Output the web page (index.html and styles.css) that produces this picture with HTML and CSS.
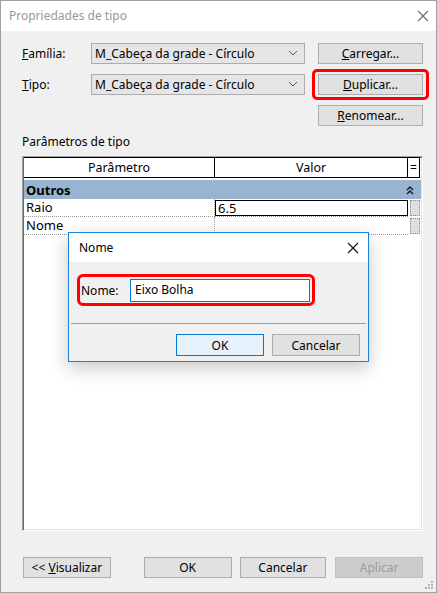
FILE: index.html
```html
<!DOCTYPE html>
<html lang="pt">
<head>
<meta charset="utf-8">
<title>Propriedades de tipo</title>
<link rel="stylesheet" href="styles.css">
</head>
<body>
<div class="window">
  <div class="titlebar">
    <span class="title">Propriedades de tipo</span>
    <svg class="close" width="12" height="12" viewBox="0 0 12 12"><path d="M1 1L11 11M11 1L1 11" stroke="#6b6b6b" stroke-width="1.1" fill="none"/></svg>
  </div>
  <div class="body">
    <div class="topgrid">
      <label class="lbl"><u>F</u>amília:</label>
      <div class="select"><span>M_Cabeça da grade - Círculo</span><svg width="10" height="6" viewBox="0 0 10 6"><path d="M1 1L5 5L9 1" stroke="#5a5a5a" stroke-width="1" fill="none"/></svg></div>
      <button class="btn"><u>C</u>arregar...</button>
      <label class="lbl"><u>T</u>ipo:</label>
      <div class="select"><span>M_Cabeça da grade - Círculo</span><svg width="10" height="6" viewBox="0 0 10 6"><path d="M1 1L5 5L9 1" stroke="#5a5a5a" stroke-width="1" fill="none"/></svg></div>
      <div class="hl"><button class="btn"><u>D</u>uplicar...</button></div>
      <span></span><span></span>
      <button class="btn"><u>R</u>enomear...</button>
    </div>
    <div class="section">Parâmetros de tipo</div>
    <div class="table">
      <div class="thead">
        <div class="th">Parâmetro</div>
        <div class="th">Valor</div>
        <div class="th eq">=</div>
      </div>
      <div class="group">
        <span>Outros</span>
        <svg width="10" height="10" viewBox="0 0 10 10"><path d="M2 5L5 2L8 5M2 9L5 6L8 9" stroke="#111" stroke-width="1.4" fill="none"/></svg>
      </div>
      <div class="row">
        <div class="cell name">Raio</div>
        <div class="cell val"><div class="valbox">6.5</div></div>
        <div class="cell side"><div class="knob"></div></div>
      </div>
      <div class="row">
        <div class="cell name">Nome</div>
        <div class="cell val"></div>
        <div class="cell side"><div class="knob"></div></div>
      </div>
    </div>
    <div class="footer">
      <button class="btn fb first">&lt;&lt; <u>V</u>isualizar</button>
      <button class="btn fb ok">OK</button>
      <button class="btn fb cancel">Cancelar</button>
      <button class="btn fb disabled">Aplicar</button>
    </div>
  </div>
  <svg class="grip" width="10" height="10" viewBox="0 0 10 10"><g fill="#b4b4b4"><rect x="7" y="1" width="2" height="2"/><rect x="4" y="4" width="2" height="2"/><rect x="7" y="4" width="2" height="2"/><rect x="1" y="7" width="2" height="2"/><rect x="4" y="7" width="2" height="2"/><rect x="7" y="7" width="2" height="2"/></g></svg>

  <div class="dialog">
    <div class="dtitle">
      <span>Nome</span>
      <svg width="12" height="12" viewBox="0 0 12 12"><path d="M1 1L11 11M11 1L1 11" stroke="#111" stroke-width="1.1" fill="none"/></svg>
    </div>
    <div class="dbody">
      <div class="namerow">
        <label class="nlbl">Nome:</label>
        <div class="input">Eixo Bolha</div>
      </div>
      <div class="sep"></div>
      <div class="dbtns">
        <button class="btn dbtn primary">OK</button>
        <button class="btn dbtn">Cancelar</button>
      </div>
    </div>
  </div>
</div>
</body>
</html>
```
FILE: styles.css
```css
html, body {
  margin: 0;
  padding: 0;
  background: #f0f0f0;
}
body {
  font-family: "Segoe UI", "Noto Sans", "DejaVu Sans", sans-serif;
  font-size: 12px;
  color: #000;
}
.window {
  position: relative;
  width: 437px;
  height: 593px;
  box-sizing: border-box;
  border: 1px solid #a0a0a0;
  display: flex;
  flex-direction: column;
  background: #f0f0f0;
}
.titlebar {
  height: 30px;
  background: #fff;
  display: flex;
  align-items: center;
  justify-content: space-between;
  padding: 0 8px 0 8px;
  flex: none;
}
.title {
  color: #999;
  font-size: 12px;
  margin-top: -1px;
}
.close {
  margin-right: -1px;
}
.body {
  flex: 1;
  padding: 12px 13px 0 21px;
  display: flex;
  flex-direction: column;
}
.topgrid {
  display: grid;
  grid-template-columns: 69px 227px 105px;
  grid-template-rows: 21px 21px 21px;
  row-gap: 10px;
  align-items: center;
}
.lbl {
  line-height: 21px;
}
.select {
  width: 214px;
  height: 21px;
  box-sizing: border-box;
  background: #e5e5e5;
  border: 1px solid #acacac;
  display: flex;
  align-items: center;
  justify-content: space-between;
  padding: 0 6px 0 3px;
  margin-top: -1px;
}
.btn {
  font-family: inherit;
  font-size: 12px;
  color: #000;
  background: #e1e1e1;
  border: 1px solid #adadad;
  height: 21px;
  box-sizing: border-box;
  padding: 0;
  margin: 0;
}
.hl {
  position: relative;
  height: 21px;
  display: flex;
}
.hl .btn {
  flex: 1;
}
.hl::after {
  content: "";
  position: absolute;
  left: -6px;
  right: -6px;
  top: -5px;
  bottom: -5px;
  border: 3px solid #f00;
  border-radius: 5px;
}
.section {
  margin-top: 8px;
  line-height: 16px;
  height: 16px;
}
.table {
  margin-top: 6px;
  height: 375px;
  box-sizing: border-box;
  background: #fff;
  border: 1px solid;
  border-color: #a0a0a0 #fff #fff #a0a0a0;
  box-shadow: inset 1px 1px 0 #696969, inset -1px -1px 0 #e3e3e3;
  padding: 1px 1px 0 1px;
  font-size: 13px;
}
.thead {
  display: grid;
  grid-template-columns: 191px 193px 12px;
  height: 20px;
}
.th {
  border-right: 1px solid #000;
  border-bottom: 1px solid #000;
  border-top: 1px solid #000;
  display: flex;
  align-items: center;
  justify-content: center;
  font-size: 12.5px;
  margin-top: -1px;
}
.th.eq {
  font-size: 12px;
}
.group {
  margin-top: 2px;
  height: 19px;
  background: #99b4d1;
  display: flex;
  align-items: center;
  justify-content: space-between;
  padding: 0 6px 0 2px;
  font-weight: bold;
}
.row {
  display: grid;
  grid-template-columns: 191px 193px 13px;
  height: 18px;
}
.cell {
  border-bottom: 1px dotted #9a9a9a;
  box-sizing: border-box;
}
.name {
  padding-left: 2px;
  line-height: 17px;
  border-right: 1px dotted #9a9a9a;
}
.val {
  padding-top: 1px;
}
.valbox {
  height: 16px;
  box-sizing: border-box;
  border: 1px solid #000;
  line-height: 14px;
  padding-left: 2px;
}
.side {
  padding: 1px 1px 0 2px;
  border-bottom: 0;
}
.knob {
  width: 10px;
  height: 16px;
  box-sizing: border-box;
  background: #dedede;
  border: 1px dotted #8a8a8a;
}
.footer {
  margin-top: 26px;
  display: flex;
  padding-left: 1px;
}
.fb {
  width: 88px;
}
.ok { margin-left: 33px; }
.cancel { margin-left: 8px; width: 87px; }
.disabled {
  margin-left: 9px;
  background: #cccccc;
  border-color: #bfbfbf;
  color: #9d9d9d;
}
.grip {
  position: absolute;
  right: 2px;
  bottom: 2px;
}
.dialog {
  position: absolute;
  left: 67px;
  top: 231px;
  width: 301px;
  height: 130px;
  box-sizing: border-box;
  border: 1px solid #1a82d8;
  background: #f0f0f0;
  box-shadow: 0 6px 18px rgba(0, 0, 0, 0.22);
  display: flex;
  flex-direction: column;
}
.dtitle {
  height: 29px;
  background: #fff;
  display: flex;
  align-items: center;
  justify-content: space-between;
  padding: 0 9px 0 10px;
  flex: none;
}
.dbody {
  flex: 1;
  padding: 12px 2px 0 2px;
}
.namerow {
  margin-left: 6px;
  width: 238px;
  height: 32px;
  box-sizing: border-box;
  border: 3px solid #f00;
  border-radius: 6px;
  display: flex;
  align-items: center;
  padding-left: 1px;
}
.nlbl {
  width: 49px;
}
.input {
  width: 180px;
  height: 23px;
  box-sizing: border-box;
  border: 1px solid #0078d7;
  background: #fff;
  line-height: 20px;
  padding-left: 4px;
}
.sep {
  margin-top: 17px;
  height: 1px;
  background: #a0a0a0;
}
.dbtns {
  margin-top: 10px;
  display: flex;
  justify-content: flex-end;
  gap: 8px;
  padding-right: 6px;
}
.dbtn {
  width: 88px;
  height: 22px;
}
.primary {
  background: #e5f1fb;
  border-color: #0078d7;
}
```
